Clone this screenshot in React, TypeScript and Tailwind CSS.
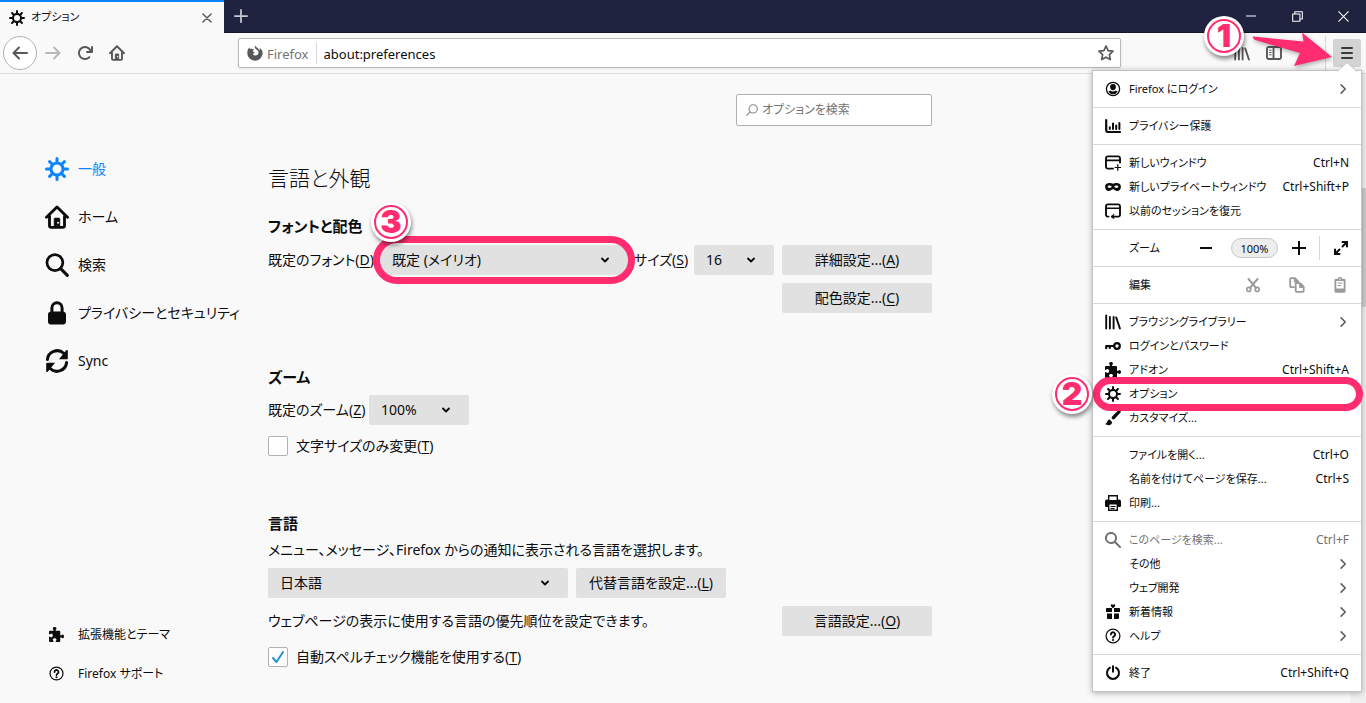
import React from 'react';

type IconProps = { className?: string };

const Svg = ({ className = 'size-4', children }: { className?: string; children: React.ReactNode }) => (
  <svg viewBox="0 0 16 16" className={`shrink-0 ${className}`} fill="currentColor" aria-hidden="true">
    {children}
  </svg>
);

const Line = ({ className = 'size-4', width = 2, children }: { className?: string; width?: number; children: React.ReactNode }) => (
  <svg
    viewBox="0 0 16 16"
    className={`shrink-0 ${className}`}
    fill="none"
    stroke="currentColor"
    strokeWidth={width}
    strokeLinecap="round"
    strokeLinejoin="round"
    aria-hidden="true"
  >
    {children}
  </svg>
);

const Gear = ({ className }: IconProps) => (
  <Svg className={className}>
    <path d="M15 7h-2.1a4.967 4.967 0 0 0-.732-1.753l1.49-1.49a1 1 0 0 0-1.414-1.414l-1.49 1.49A4.968 4.968 0 0 0 9 3.1V1a1 1 0 0 0-2 0v2.1a4.968 4.968 0 0 0-1.753.732l-1.49-1.49a1 1 0 0 0-1.414 1.415l1.49 1.49A4.967 4.967 0 0 0 3.1 7H1a1 1 0 0 0 0 2h2.1a4.968 4.968 0 0 0 .737 1.763l-1.495 1.48a1 1 0 1 0 1.414 1.414l1.48-1.495A4.968 4.968 0 0 0 7 12.9V15a1 1 0 0 0 2 0v-2.1a4.968 4.968 0 0 0 1.753-.732l1.49 1.49a1 1 0 0 0 1.414-1.414l-1.49-1.49A4.967 4.967 0 0 0 12.9 9H15a1 1 0 0 0 0-2zM5 8a3 3 0 1 1 3 3 3 3 0 0 1-3-3z" />
  </Svg>
);

const Home = ({ className }: IconProps) => (
  <Line className={className} width={1.9}>
    <path d="M1 8.2 8 1.3l7 6.9M3 7.5v6.2a1.2 1.2 0 0 0 1.2 1.2h7.6a1.2 1.2 0 0 0 1.2-1.2V7.5" />
    <path d="M6.1 14.5V9.3a.6.6 0 0 1 .6-.6h2.6a.6.6 0 0 1 .6.6v5.2z" fill="currentColor" strokeWidth="0.4" />
    <circle cx="8.7" cy="11.8" r="0.7" fill="#f9f9fa" stroke="none" />
  </Line>
);

const Search = ({ className }: IconProps) => (
  <Svg className={className}>
    <path d="M15.707 14.293l-4.822-4.822a6.019 6.019 0 1 0-1.414 1.414l4.822 4.822a1 1 0 0 0 1.414-1.414zM6 10a4 4 0 1 1 4-4 4 4 0 0 1-4 4z" />
  </Svg>
);

const BigSearch = ({ className }: IconProps) => (
  <Line className={className} width={1.8}>
    <circle cx="6.6" cy="6.4" r="5.3" />
    <path d="m10.6 10.6 4.3 4.3" strokeWidth="2" />
  </Line>
);

const Lock = ({ className }: IconProps) => (
  <Svg className={className}>
    <path d="M12.4 7.1V4.6a4.4 4.4 0 0 0-8.8 0v2.5A1.8 1.8 0 0 0 2 8.9v4.8A1.9 1.9 0 0 0 3.9 15.6h8.2a1.9 1.9 0 0 0 1.9-1.9V8.9a1.8 1.8 0 0 0-1.6-1.8zM5.6 4.6a2.4 2.4 0 0 1 4.8 0V7H5.6z" />
  </Svg>
);

const Sync = ({ className }: IconProps) => (
  <Svg className={className}>
    <path d="M1.6 7A6.5 6.5 0 0 1 12.6 3M14.4 9A6.5 6.5 0 0 1 3.4 13" fill="none" stroke="currentColor" strokeWidth="2" strokeLinecap="round" />
    <path d="M15.2.9v5.2a.8.8 0 0 1-.8.8H9.3L14.3.7zM.8 15.1V9.9a.8.8 0 0 1 .8-.8h5.1l-5 6.2z" />
  </Svg>
);

const Puzzle = ({ className }: IconProps) => (
  <Svg className={className}>
    <path d="M14.5 8c-.971 0-1 1-1.75 1a.765.765 0 0 1-.75-.75V5a1 1 0 0 0-1-1H7.75A.765.765 0 0 1 7 3.25c0-.75 1-.779 1-1.75C8 .635 7.1 0 6 0S4 .635 4 1.5c0 .971 1 1 1 1.75a.765.765 0 0 1-.75.75H1a1 1 0 0 0-1 1v2.25A.765.765 0 0 0 .75 8c.75 0 .779-1 1.75-1C3.365 7 4 7.9 4 9s-.635 2-1.5 2c-.971 0-1-1-1.75-1a.765.765 0 0 0-.75.75V15a1 1 0 0 0 1 1h3.25a.765.765 0 0 0 .75-.75c0-.75-1-.779-1-1.75 0-.865.9-1.5 2-1.5s2 .635 2 1.5c0 .971-1 1-1 1.75a.765.765 0 0 0 .75.75H11a1 1 0 0 0 1-1v-3.25a.765.765 0 0 1 .75-.75c.75 0 .779 1 1.75 1 .865 0 1.5-.9 1.5-2s-.635-2-1.5-2z" />
  </Svg>
);

const Help = ({ className }: IconProps) => (
  <Line className={className} width={1.3}>
    <circle cx="8" cy="8" r="6.9" />
    <path d="M5.9 6.4a2.1 2.1 0 1 1 3.3 1.7c-.7.5-1.2.8-1.2 1.5" strokeWidth="1.9" />
    <circle cx="8" cy="12" r="1.1" fill="currentColor" stroke="none" />
  </Line>
);

const Account = ({ className }: IconProps) => (
  <Svg className={className}>
    <circle cx="8" cy="8" r="6.6" fill="none" stroke="currentColor" strokeWidth="1.3" />
    <path d="M8 3a2.9 2.9 0 0 1 2.9 3c0 1.7-1.2 3.300-2.9 3.300S5.100 7.700 5.100 6A2.900 2.900 0 0 1 8 3z" />
    <path d="M3.400 10.400l2-.9C6.100 10.200 7 10.600 8 10.600s1.900-.4 2.600-1.100l2 .9A5.200 5.200 0 0 1 8 13.200a5.200 5.200 0 0 1-4.600-2.800z" />
  </Svg>
);

const Chart = ({ className }: IconProps) => (
  <Line className={className} width={2.2}>
    <path d="M1.2 2v10a2 2 0 0 0 2 2H15" />
    <path d="M4.800 11V9.200M8 11V5.500M11.200 11V7.500M14.400 11V5" strokeWidth="2" />
  </Line>
);

const NewWindow = ({ className }: IconProps) => (
  <Line className={className} width={1.9}>
    <path d="M8 13.600H2.800A1.800 1.800 0 0 1 1 11.800V3.200A1.800 1.800 0 0 1 2.800 1.400h10.400A1.800 1.800 0 0 1 15 3.200v4.300" />
    <path d="M1.500 5.400h13" strokeWidth="1.7" />
    <path d="M12.800 9.700v5.600M10 12.500h5.600" strokeWidth="1.2" />
  </Line>
);

const Mask = ({ className }: IconProps) => (
  <Svg className={className}>
    <path
      fillRule="evenodd"
      d="M4.300 4C1.800 4 .1 5.200.1 7.700.1 10.300 1.500 12 3.800 12c2 0 3-1.700 4.200-1.700S10.200 12 12.200 12c2.300 0 3.700-1.700 3.700-4.300C15.900 5.200 14.200 4 11.700 4 9.900 4 9.200 4.700 8 4.700S6.100 4 4.300 4zM4.500 6.600c1.100 0 2 .6 2.300 1.200-.4.600-1.300 1.100-2.200 1.100-1 0-1.900-.6-2-1.200.2-.6.900-1.100 1.900-1.100zm7 0c1 0 1.700.5 1.900 1.100-.1.600-1 1.200-2 1.200-.9 0-1.800-.5-2.200-1.100.3-.6 1.200-1.200 2.300-1.200z"
    />
  </Svg>
);

const Restore = ({ className }: IconProps) => (
  <Line className={className} width={1.9}>
    <path d="M3.500 13.600h-.7A1.800 1.800 0 0 1 1 11.800V3.200A1.800 1.800 0 0 1 2.800 1.400h10.400A1.800 1.800 0 0 1 15 3.200v8.600a1.800 1.800 0 0 1-1.800 1.800H7" />
    <path d="M1.500 5.200h13" strokeWidth="1.5" />
    <path d="M8.600 11.200 6 13.600 8.600 16z" fill="currentColor" strokeWidth="0.5" />
  </Line>
);

const Library = ({ className }: IconProps) => (
  <Line className={className} width={1.9}>
    <path d="M1.200 1.500v13M4.900 3v11.500M8.600 3v11.500M11.200 3.400l3.700 11.100" />
  </Line>
);

const Key = ({ className }: IconProps) => (
  <Line className={className} width={2.2}>
    <circle cx="12" cy="8" r="2.8" />
    <path d="M9 8H1.200v2.200M4.800 8v2" />
  </Line>
);

const Brush = ({ className }: IconProps) => (
  <Svg className={className}>
    <path d="M15.500.4c-.6-.6-1.700-.3-2.600.4L7.600 6a4 4 0 0 0-1 2.200l1.300 1.300a4 4 0 0 0 2.100-1.100l5-5.300c.800-.9 1.100-2.100.5-2.700zM4.700 9.400c-1.300 0-2.200.9-2.400 2.200-.2 1.200-.8 1.900-2 2.100 1 1.400 3.100 1.700 4.600 1.200 1.400-.4 2.200-1.600 2.100-3z" />
  </Svg>
);

const Printer = ({ className }: IconProps) => (
  <Svg className={className}>
    <path
      fillRule="evenodd"
      d="M3 0h10v4.600h1.200A1.800 1.800 0 0 1 16 6.400V11a1 1 0 0 1-1 1h-2v4H3v-4H1a1 1 0 0 1-1-1V6.400a1.800 1.800 0 0 1 1.800-1.800H3zm1.400 1.500v3.600h7.200V1.500zM4.400 9.600v5h7.200v-5zM5.500 11h5v1h-5zm0 2h4v1h-4z"
    />
  </Svg>
);

const Gift = ({ className }: IconProps) => (
  <Svg className={className}>
    <path d="M8 4.400 6 2.200C5 1 6.900-.6 8 .9 9.100-.6 11 1 10 2.200zM1.800 4H7v4H1V4.800A.8.8 0 0 1 1.800 4zM9 4h5.200a.8.8 0 0 1 .8.800V8H9zM2 9.500h5V15H2.800a.8.800 0 0 1-.8-.8zM9 9.500h5v4.700a.8.800 0 0 1-.8.800H9z" />
  </Svg>
);

const Power = ({ className }: IconProps) => (
  <Line className={className}>
    <path d="M5 2.700a6 6 0 1 0 6 0M8 1.200v5.600" />
  </Line>
);

const Chevron = ({ className }: IconProps) => (
  <Line className={className} width={2}>
    <path d="m5.500 2.500 5.500 5.500-5.500 5.500" />
  </Line>
);

const UI_FONT = "font-['Noto_Sans','Noto_Sans_CJK_JP',sans-serif] [font-feature-settings:'palt']";

type Item = { icon?: React.ReactNode; label: string; keys?: string; more?: boolean; dim?: boolean; marked?: boolean };

function Badge({ n, className }: { n: number; className: string }) {
  return (
    <span className={`absolute z-20 flex size-10 items-center justify-center rounded-full bg-white shadow-[1px_3px_4px_rgba(0,0,0,0.45)] ${className}`}>
      <span className="flex size-[34px] items-center justify-center rounded-full border-2 border-[#ff2d6f] font-['Inter','Liberation_Sans',sans-serif] text-[32px] leading-none font-black text-[#ff2d6f]">
        {n}
      </span>
    </span>
  );
}

function MenuRow({ item }: { item: Item }) {
  return (
    <li className="relative">
      <button type="button" className={`flex h-6 w-full items-center gap-2 px-3 text-left ${item.dim ? 'text-[#737373]' : 'text-[#0c0c0d]'}`}>
        <span className="flex size-4 shrink-0 items-center justify-center">{item.icon}</span>
        <span className="flex-1 whitespace-nowrap">{item.label}</span>
        {item.keys && <span className="text-xs whitespace-nowrap">{item.keys}</span>}
        {item.more && <Chevron className="size-3 text-[#5a5a5c]" />}
      </button>
      {item.marked && (
        <>
          <span className="pointer-events-none absolute -inset-y-[5px] -right-[2px] left-0 z-10 rounded-full border-[7px] border-[#ff2d6f]" />
          <Badge n={2} className="top-[-8px] left-[-41px]" />
        </>
      )}
    </li>
  );
}

function MenuSection({ items }: { items: Item[] }) {
  return (
    <ul className="border-t border-[#d7d7db] py-[6px] first-of-type:border-t-0">
      {items.map((item) => (
        <MenuRow key={item.label} item={item} />
      ))}
    </ul>
  );
}

function AppMenu() {
  return (
    <div className="absolute top-[34px] -right-px z-10 w-[270px] border border-[#c4c4c6] bg-white text-[11px] shadow-[0_1px_6px_rgba(0,0,0,0.3)]">
      <svg viewBox="0 0 20 10" className="absolute -top-[9px] right-[4px] h-[10px] w-5" aria-hidden="true">
        <path d="M0 9.500 10 .5l10 9" fill="#fff" stroke="#c4c4c6" />
      </svg>
      <MenuSection items={[{ icon: <Account />, label: 'Firefox にログイン', more: true }]} />
      <MenuSection items={[{ icon: <Chart />, label: 'プライバシー保護' }]} />
      <MenuSection
        items={[
          { icon: <NewWindow />, label: '新しいウィンドウ', keys: 'Ctrl+N' },
          { icon: <Mask />, label: '新しいプライベートウィンドウ', keys: 'Ctrl+Shift+P' },
          { icon: <Restore />, label: '以前のセッションを復元' },
        ]}
      />
      <div className="flex h-[37px] items-center border-t border-[#d7d7db] pl-9 text-[#0c0c0d]">
        <span className="flex-1">ズーム</span>
        <button type="button" aria-label="縮小" className="mr-[3px] flex w-11 items-center justify-center">
          <Line><path d="M2 8h12" strokeLinecap="butt" /></Line>
        </button>
        <button type="button" className="h-5 w-[47px] rounded-full border border-[#c8c8ca] bg-[#ededee] leading-none">100%</button>
        <button type="button" aria-label="拡大" className="flex w-[41px] items-center justify-center">
          <Line><path d="M1 8h14M8 1v14" strokeLinecap="butt" /></Line>
        </button>
        <button type="button" aria-label="全画面表示" className="flex h-6 w-[42px] items-center justify-center border-l border-[#d7d7db]">
          <Line>
            <path d="M9.500 2H14v4.500M14 2 9.500 6.500M6.500 14H2V9.500M2 14l4.500-4.500" strokeLinejoin="miter" />
          </Line>
        </button>
      </div>
      <div className="flex h-[37px] items-center border-t border-[#d7d7db] pl-9 text-[#0c0c0d]">
        <span className="flex-1">編集</span>
        <button type="button" aria-label="切り取り" className="flex w-11 justify-center text-[#9a9a9c]">
          <Line width={1.6}>
            <circle cx="3.8" cy="12.400" r="2" />
            <circle cx="12.200" cy="12.400" r="2" />
            <path d="M5 10.800 12.500 2M11 10.800 3.500 2" strokeWidth="2" />
          </Line>
        </button>
        <button type="button" aria-label="コピー" className="flex w-11 justify-center text-[#9a9a9c]">
          <Line width={1.8}>
            <path d="M5 10.200H2.200a1 1 0 0 1-1-1V2.200a1 1 0 0 1 1-1H6l3 3v1M5.700 1.500v3h3" />
            <path d="M6.700 6.200h4.500l3.500 3.500v4.100a1 1 0 0 1-1 1H7.700a1 1 0 0 1-1-1zM11 6.500V10h3.500" />
          </Line>
        </button>
        <button type="button" aria-label="貼り付け" className="flex w-[42px] justify-center text-[#9a9a9c]">
          <Svg>
            <path fillRule="evenodd" d="M6 1.800a2 2 0 0 1 4 0h2.200A1.300 1.300 0 0 1 13.500 3.100v11.400a1.300 1.300 0 0 1-1.300 1.300H3.800a1.300 1.300 0 0 1-1.300-1.300V3.100a1.300 1.300 0 0 1 1.300-1.300zM8 1.200a.8.8 0 1 0 0 1.600.8.800 0 0 0 0-1.600zM4.300 4v7.500h7.400V4zM5.500 5.500h5v1h-5zm0 2.500h3.500v1H5.500z" />
          </Svg>
        </button>
      </div>
      <div className="border-t border-[#d7d7db]">
        <MenuSection
          items={[
            { icon: <Library />, label: 'ブラウジングライブラリー', more: true },
            { icon: <Key />, label: 'ログインとパスワード' },
            { icon: <Puzzle />, label: 'アドオン', keys: 'Ctrl+Shift+A' },
            { icon: <Gear />, label: 'オプション', marked: true },
            { icon: <Brush />, label: 'カスタマイズ...' },
          ]}
        />
      </div>
      <MenuSection
        items={[
          { label: 'ファイルを開く...', keys: 'Ctrl+O' },
          { label: '名前を付けてページを保存...', keys: 'Ctrl+S' },
          { icon: <Printer />, label: '印刷...' },
        ]}
      />
      <MenuSection
        items={[
          { icon: <Search />, label: 'このページを検索...', keys: 'Ctrl+F', dim: true },
          { label: 'その他', more: true },
          { label: 'ウェブ開発', more: true },
          { icon: <Gift />, label: '新着情報', more: true },
          { icon: <Help />, label: 'ヘルプ', more: true },
        ]}
      />
      <MenuSection items={[{ icon: <Power />, label: '終了', keys: 'Ctrl+Shift+Q' }]} />
    </div>
  );
}

const AccessKey = ({ k }: { k: string }) => (
  <>
    (<span className="underline underline-offset-2">{k}</span>)
  </>
);

function Dropdown({ id, value, className, marked }: { id: string; value: string; className: string; marked?: boolean }) {
  return (
    <div className={`relative shrink-0 ${className}`}>
      <select id={id} className="h-[30px] w-full appearance-none rounded-xs bg-[#e1e1e2] px-3 text-[#0c0c0d]">
        <option>{value}</option>
      </select>
      <Line className="pointer-events-none absolute top-[11px] right-[19px] size-2" width={3.6}>
        <path d="m2 5 6 6 6-6" />
      </Line>
      {marked && (
        <>
          <span className="pointer-events-none absolute -inset-x-[7px] -inset-y-[9px] rounded-full border-[7px] border-[#ff2d6f]" />
          <Badge n={3} className="top-[-43px] left-[-9px]" />
        </>
      )}
    </div>
  );
}

function PushButton({ children }: { children: React.ReactNode }) {
  return (
    <button type="button" className="h-[30px] w-[150px] shrink-0 rounded-xs bg-[#e1e1e2] text-center whitespace-nowrap">
      {children}
    </button>
  );
}

function CheckRow({ id, checked, children }: { id: string; checked?: boolean; children: React.ReactNode }) {
  return (
    <div className="mt-[11px] flex h-5 items-center gap-2">
      <span className="relative size-5 shrink-0">
        <input id={id} type="checkbox" defaultChecked={checked} className="peer block size-5 appearance-none rounded-xs border border-[#b1b1b3] bg-white" />
        <Line className="pointer-events-none absolute top-[2px] left-[2px] hidden size-4 text-[#2292d0] peer-checked:block">
          <path d="m3 9 3.500 4L13 3" />
        </Line>
      </span>
      <label htmlFor={id}>{children}</label>
    </div>
  );
}

const nav = [
  { icon: <Gear className="size-6" />, label: '一般', active: true },
  { icon: <Home className="size-6" />, label: 'ホーム' },
  { icon: <BigSearch className="size-6" />, label: '検索' },
  { icon: <Lock className="size-6" />, label: 'プライバシーとセキュリティ' },
  { icon: <Sync className="size-6" />, label: 'Sync' },
];

export default function App() {
  return (
    <div className={`flex h-screen flex-col overflow-hidden bg-[#f9f9fa] text-[#0c0c0d] ${UI_FONT}`}>
      <header className="flex h-[33px] shrink-0 bg-[#202340]">
        <div className="flex w-56 items-center gap-[6px] border-t-2 border-[#0a84ff] bg-[#f9f9fa] pr-3 pl-[9px] text-[11px]">
          <Gear />
          <span className="flex-1">オプション</span>
          <button type="button" aria-label="タブを閉じる" className="text-[#5a5a5c]">
            <Line className="size-[10px]" width={2.4}><path d="m1.500 1.500 13 13M14.500 1.500l-13 13" /></Line>
          </button>
        </div>
        <button type="button" aria-label="新しいタブ" className="flex w-[34px] items-center justify-center border-b border-[#14162b] text-[#c8c8d0]">
          <Line className="size-[14px]"><path d="M8 1v14M1 8h14" /></Line>
        </button>
        <div className="flex-1 border-b border-[#14162b]" />
        <div className="flex border-b border-[#14162b] text-white">
          <button type="button" aria-label="最小化" className="flex w-[46px] items-center justify-center">
            <Line className="size-[10px]" width={1.6}><path d="M0 8h16" /></Line>
          </button>
          <button type="button" aria-label="元に戻す" className="flex w-[46px] items-center justify-center">
            <Line className="size-[11px]" width={1.5}><path d="M1 4.500h10.500V15H1zM4 4V1h11v10.500h-3" /></Line>
          </button>
          <button type="button" aria-label="閉じる" className="flex w-[46px] items-center justify-center">
            <Line className="size-[11px]" width={1.5}><path d="m1 1 14 14M15 1 1 15" /></Line>
          </button>
        </div>
      </header>

      <div className="flex h-[41px] shrink-0 items-center border-b border-[#dcdcde] pr-[5px] text-[#58585a]">
        <div className="flex w-[238px] shrink-0 items-center pl-[3px]">
          <button type="button" aria-label="戻る" className="flex size-[34px] items-center justify-center rounded-full border border-[#b1b1b3] bg-white">
            <Line><path d="M15 8H1.500M7 2.500 1.500 8 7 13.500" /></Line>
          </button>
          <button type="button" aria-label="進む" className="flex w-8 items-center justify-center text-[#b8b8ba]">
            <Line><path d="M1 8h13.500M9 2.500 14.500 8 9 13.500" /></Line>
          </button>
          <button type="button" aria-label="再読み込み" className="flex w-8 items-center justify-center">
            <Svg>
              <path d="M15 1a1 1 0 0 0-1 1v2.418A6.995 6.995 0 1 0 8 15a6.954 6.954 0 0 0 4.950-2.050 1 1 0 0 0-1.414-1.414A5.019 5.019 0 1 1 12.549 6H10a1 1 0 0 0 0 2h5a1 1 0 0 0 1-1V2a1 1 0 0 0-1-1z" />
            </Svg>
          </button>
          <button type="button" aria-label="ホーム" className="flex w-8 items-center justify-center">
            <Home />
          </button>
        </div>
        <div className="flex h-[30px] flex-1 items-center rounded-xs border border-[#b9b9bb] bg-white pr-[6px] pl-2 text-[13px] shadow-[0_1px_3px_rgba(0,0,0,0.08)]">
          <Svg>
            <path d="M8 .3c.4 1 1.100 1.500 1.900 2.100 1.500 1 2.300 2.200 2.500 3.600.4-.9.4-1.900.2-3 2.400 1.500 3.300 3.600 3 5.800A7.700 7.700 0 0 1 8 15.700 7.600 7.600 0 0 1 .3 8.200c0-2.200.6-4.300 2-5.700.1.700.3 1.100.8 1.500.8-.3 1.700-.2 2.500.3.900-.2 1.400 0 1.800.3-.9.6-1.400 1-1.500 1.700.3.700 1 .8 1.900.8-.3 1-1.100 1.400-2 1.600.4 1.200 1.400 1.900 2.700 1.900 1.700 0 3-1.300 3-3 0-1.600-1.100-2.500-2.300-3.300C7.900 3.400 7.500 2 8 .3z" />
          </Svg>
          <span className="ml-1 pt-[3px] text-[#737373]">Firefox</span>
          <span className="mx-[7px] h-[22px] w-px bg-[#d7d7db]" />
          <input aria-label="アドレス" defaultValue="about:preferences" className="min-w-0 flex-1 bg-transparent pt-[3px] text-[#0c0c0d] outline-none" />
          <Line width={1.7}>
            <path d="m8 1 2.100 4.600 4.900.6-3.600 3.400.9 5L8 12.200l-4.300 2.400.9-5L1 6.200l4.900-.6z" />
          </Line>
        </div>
        <div className="flex w-60 shrink-0 items-center justify-end">
          <button type="button" aria-label="ブラウジングライブラリー" className="flex w-8 justify-center"><Library /></button>
          <button type="button" aria-label="サイドバー" className="mr-[35px] flex w-8 justify-center">
            <Line width={1.9}>
              <path d="M2.800 2h10.400A1.800 1.800 0 0 1 15 3.800v8.400a1.800 1.800 0 0 1-1.800 1.800H2.800A1.800 1.800 0 0 1 1 12.200V3.800A1.800 1.800 0 0 1 2.800 2zM7.500 2.500v11" />
              <path d="M3.500 5.200h1.700M3.500 7.500h1.700M3.500 9.800h1.700" strokeWidth="1" />
            </Line>
          </button>
          <div className="relative flex h-[34px] items-center border-l border-[#d7d7db] pl-[7px]">
            <button type="button" aria-label="メニュー" className="flex size-7 items-center justify-center rounded-xs bg-[#d3d3d4] text-[#3a3a3c]">
              <Line><path d="M3 3h10M3 8h10M3 13h10" /></Line>
            </button>
            <AppMenu />
            <Badge n={1} className="-top-5 -left-[122px]" />
            <svg viewBox="0 0 80 36" className="absolute -top-1 -left-[74px] z-20 h-9 w-20 drop-shadow-[1px_2px_2px_rgba(0,0,0,0.3)]" aria-hidden="true">
              <path d="M1 4.500Q0 6 3 8l45 13-6 13 38-9L50 .5l1.500 9z" fill="#ff2d6f" />
            </svg>
          </div>
        </div>
      </div>

      <div className="flex min-h-0 flex-1 overflow-hidden text-[14px] leading-6">
        <aside className="flex w-[268px] shrink-0 flex-col pt-[71px] pl-[45px]">
          <nav className="flex flex-col">
            {nav.map((n) => (
              <a key={n.label} href="#" className={`flex h-12 items-center gap-[9px] whitespace-nowrap ${n.active ? 'text-[#0a84ff]' : ''}`}>
                {n.icon}
                {n.label}
              </a>
            ))}
          </nav>
          <div className="mt-auto flex flex-col pb-[10px] text-[12px]">
            <a href="#" className="flex h-[39px] items-center gap-[14px] pl-1">
              <Puzzle className="size-[15px]" />
              拡張機能とテーマ
            </a>
            <a href="#" className="flex h-[39px] items-center gap-[14px] pl-1">
              <Help className="size-[15px]" />
              Firefox サポート
            </a>
          </div>
        </aside>

        <main className="min-w-0 flex-1 pt-5">
          <div className="max-w-[664px]">
            <div className="ml-auto flex h-8 w-[196px] items-center gap-1 rounded-xs border border-[#b1b1b3] bg-white px-[9px] text-[#8a8a8c]">
              <Line className="size-3" width={1.5}>
                <circle cx="9.500" cy="6.500" r="5.500" />
                <path d="M5.500 10.500 1 15" />
              </Line>
              <input aria-label="オプションを検索" placeholder="オプションを検索" className="min-w-0 flex-1 bg-transparent text-[12px] outline-none placeholder:text-[#737373]" />
            </div>

            <h1 className="mt-9 text-[21px] leading-8 font-light">言語と外観</h1>

            <h2 className="mt-5 text-[15px] leading-6 font-bold">フォントと配色</h2>
            <div className="mt-[7px] flex items-center">
              <label htmlFor="font" className="w-28 whitespace-nowrap">既定のフォント<AccessKey k="D" /></label>
              <Dropdown id="font" value="既定 (メイリオ)" className="w-[248px]" marked />
              <label htmlFor="size" className="ml-[6px] flex-1 whitespace-nowrap">サイズ<AccessKey k="S" /></label>
              <Dropdown id="size" value="16" className="mr-2 w-20" />
              <PushButton>詳細設定...<AccessKey k="A" /></PushButton>
            </div>
            <div className="mt-2 flex justify-end">
              <PushButton>配色設定...<AccessKey k="C" /></PushButton>
            </div>

            <h2 className="mt-[52px] text-[15px] leading-6 font-bold">ズーム</h2>
            <div className="mt-[6px] flex items-center">
              <label htmlFor="zoom" className="w-[101px] whitespace-nowrap">既定のズーム<AccessKey k="Z" /></label>
              <Dropdown id="zoom" value="100%" className="w-[100px]" />
            </div>
            <CheckRow id="text-only">文字サイズのみ変更<AccessKey k="T" /></CheckRow>

            <h2 className="mt-[55px] text-[15px] leading-6 font-bold">言語</h2>
            <p className="mt-[3px]">メニュー、メッセージ、Firefox からの通知に表示される言語を選択します。</p>
            <div className="mt-[6px] flex gap-2">
              <Dropdown id="lang" value="日本語" className="w-[300px]" />
              <PushButton>代替言語を設定...<AccessKey k="L" /></PushButton>
            </div>
            <div className="mt-2 flex items-center justify-between">
              <p>ウェブページの表示に使用する言語の優先順位を設定できます。</p>
              <PushButton>言語設定...<AccessKey k="O" /></PushButton>
            </div>
            <CheckRow id="spell" checked>自動スペルチェック機能を使用する<AccessKey k="T" /></CheckRow>
          </div>
        </main>

        <div className="w-4 shrink-0 bg-[#f0f0f0] pt-[114px]">
          <div className="h-[119px] bg-[#cdcdcd]" />
        </div>
      </div>
    </div>
  );
}
